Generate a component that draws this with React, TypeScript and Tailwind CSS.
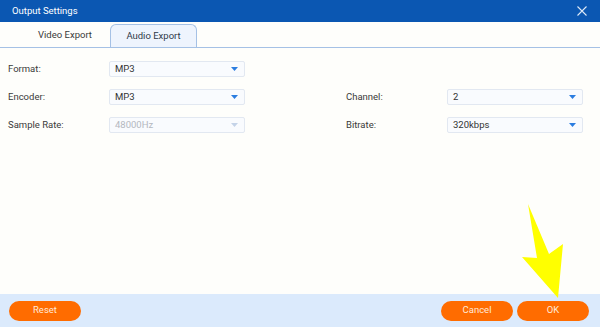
import React from "react";

const Select = ({ value, disabled }: { value: string; disabled?: boolean }) => (
  <div className="flex h-[16px] w-[136px] items-center justify-between rounded-[2px] border border-[#e2e8f1] bg-[#f9fbfe] pl-[5px] pr-[6px]">
    <span className={disabled ? "text-[#b4b8bf]" : "text-[#333]"}>{value}</span>
    <svg width="7" height="4" viewBox="0 0 7 4">
      <path d="M0 0 H7 L3.5 4 Z" fill={disabled ? "#c4d3e8" : "#2b7de0"} />
    </svg>
  </div>
);

const Row = ({ label, children }: { label: string; children: React.ReactNode }) => (
  <div className="flex h-[28px] items-center">
    <span className="w-[101px] text-[#3a3a3a]">{label}</span>
    {children}
  </div>
);

export default function App() {
  return (
    <div
      className="relative flex h-[327px] w-[600px] flex-col overflow-hidden bg-[#fefefb] text-[9.5px]"
      style={{ fontFamily: "Roboto, 'Liberation Sans', sans-serif" }}
    >
      <div className="flex h-[22px] items-center justify-between bg-[#0b57b2] pl-[12px] pr-[13px] text-white">
        <span>Output Settings</span>
        <svg width="10" height="10" viewBox="0 0 10 10">
          <path d="M0.5 0.5 L9.5 9.5 M9.5 0.5 L0.5 9.5" stroke="#dfe9f7" strokeWidth="1.1" />
        </svg>
      </div>

      <div className="flex h-[26px] items-end border-b-[1.5px] border-[#a5c1e5] pl-[20px]">
        <div className="flex h-[23px] w-[90px] items-center justify-center text-[#3a3a3a]">Video Export</div>
        <div className="flex h-[23px] w-[87px] items-center justify-center rounded-t-[6px] border border-b-0 border-[#a5c1e5] bg-[#eef4fd] text-[#2f3a4a]">
          Audio Export
        </div>
      </div>

      <div className="flex flex-1 pl-[8px] pt-[7px]">
        <div className="flex w-[338px] flex-col">
          <Row label="Format:">
            <Select value="MP3" />
          </Row>
          <Row label="Encoder:">
            <Select value="MP3" />
          </Row>
          <Row label="Sample Rate:">
            <Select value="48000Hz" disabled />
          </Row>
        </div>
        <div className="flex flex-col pt-[28px]">
          <Row label="Channel:">
            <Select value="2" />
          </Row>
          <Row label="Bitrate:">
            <Select value="320kbps" />
          </Row>
        </div>
      </div>

      <div className="flex h-[33px] items-center justify-between bg-[#dbeafc] pl-[9px] pr-[11px]">
        <button className="h-[20px] w-[72px] rounded-full bg-[#ff6c00] text-[#ffe9d8]">Reset</button>
        <div className="flex gap-[4px]">
          <button className="h-[20px] w-[72px] rounded-full bg-[#ff6c00] text-[#ffe9d8]">Cancel</button>
          <button className="h-[20px] w-[72px] rounded-full bg-[#ff6c00] text-[#ffe9d8]">OK</button>
        </div>
      </div>

      <svg className="absolute left-0 top-0" width="600" height="327" viewBox="0 0 600 327">
        <polygon
          points="528,204 537,258 522,257 558,298 563,244 549,254"
          fill="#ffff00"
        />
      </svg>
    </div>
  );
}
